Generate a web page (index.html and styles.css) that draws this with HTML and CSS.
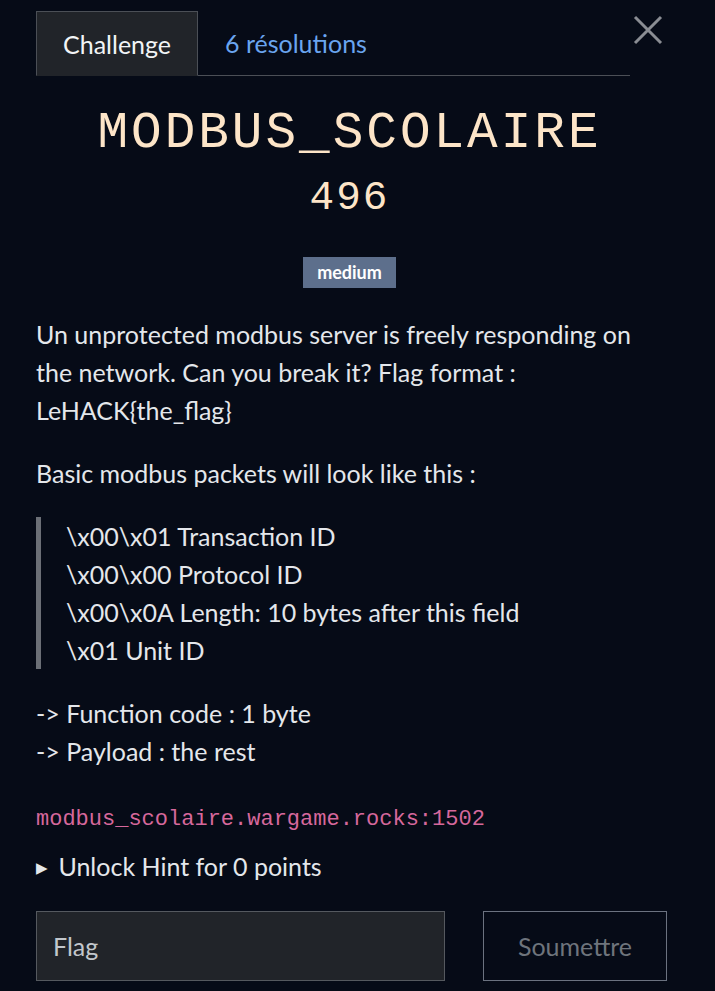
FILE: index.html
```html
<!DOCTYPE html>
<html>

<head>
    <title>MODBUS_SCOLAIRE - Challenge</title>
    <link rel="stylesheet" href="styles.css">
</head>

<body>
    <div class="modal">
        <!-- Tabs + close button -->
        <div class="modal-head">
            <ul class="tabs">
                <li class="tab active">Challenge</li>
                <li class="tab link">6 résolutions</li>
            </ul>
            <button class="close" aria-label="Close">
                <svg width="30" height="30" viewBox="0 0 30 30">
                    <path d="M2 2 L28 28 M28 2 L2 28" stroke="#8a8d93" stroke-width="3" fill="none" />
                </svg>
            </button>
        </div>

        <!-- Challenge header -->
        <h2 class="challenge-name">MODBUS_SCOLAIRE</h2>
        <h3 class="challenge-value">496</h3>
        <div class="tags">
            <span class="badge">medium</span>
        </div>

        <!-- Description -->
        <div class="challenge-desc">
            <p>Un unprotected modbus server is freely responding on the network. Can you break it? Flag format : LeHACK{the_flag}</p>
            <p>Basic modbus packets will look like this :</p>
            <blockquote>
                \x00\x01 Transaction ID<br>
                \x00\x00 Protocol ID<br>
                \x00\x0A Length: 10 bytes after this field<br>
                \x01 Unit ID
            </blockquote>
            <p>-&gt; Function code : 1 byte<br>-&gt; Payload : the rest</p>
            <p class="conn"><code>modbus_scolaire.wargame.rocks:1502</code></p>
        </div>

        <!-- Hint -->
        <div class="hint">
            <span class="arrow">&#9654;</span> Unlock Hint for 0 points
        </div>

        <!-- Submit -->
        <form class="submit-row">
            <input type="text" class="flag-input" placeholder="Flag">
            <button type="button" class="submit-btn">Soumettre</button>
        </form>
    </div>
</body>

</html>
```

FILE: styles.css
```css
body {
    margin: 0;
    background: #060b17;
    color: #e4e7eb;
    font-family: Lato, "Noto Sans", sans-serif;
}

.modal {
    padding: 11px 52px 0 36px;
}

.modal-head {
    display: flex;
    align-items: flex-start;
}

.tabs {
    display: flex;
    flex: 1;
    list-style: none;
    margin: 0;
    padding: 0;
    border-bottom: 1px solid #4b4f56;
}

.tab {
    padding: 0 26px;
    height: 63px;
    line-height: 65px;
    font-size: 25px;
    margin-bottom: -1px;
}

.tab.active {
    background: #212429;
    border: 1px solid #4b4f56;
    border-bottom-color: #212429;
    color: #f2f4f6;
}

.tab.link {
    color: #6aa5ef;
    padding-left: 27px;
}

.close {
    background: none;
    border: 0;
    padding: 0;
    margin: 4px 0 0 3px;
    width: 30px;
    height: 30px;
    cursor: pointer;
}

.close svg {
    display: block;
}

.challenge-name {
    margin: 28px 0 0;
    text-align: center;
    font-family: "Liberation Mono", monospace;
    font-weight: normal;
    font-size: 51px;
    letter-spacing: 3px;
    line-height: 60px;
    color: #fde5c8;
}

.challenge-value {
    margin: 9px 0 0;
    text-align: center;
    font-family: "Liberation Mono", monospace;
    font-weight: normal;
    font-size: 41px;
    letter-spacing: 0.05em;
    line-height: 50px;
    color: #fde5c8;
}

.tags {
    text-align: center;
    margin-top: 34px;
}

.badge {
    display: inline-block;
    background: #5d6f8c;
    color: #fff;
    font-weight: bold;
    font-size: 18px;
    padding: 0 14px;
    height: 31px;
    line-height: 31px;
}

.challenge-desc {
    margin-top: 27px;
    font-size: 25px;
    line-height: 38px;
}

.challenge-desc p {
    margin: 0 0 25px;
}

blockquote {
    margin: 0 0 25px;
    padding: 0 0 0 25px;
    border-left: 5px solid #6b6f76;
}

.conn {
    font-size: 22px;
    padding-top: 3px;
}

code {
    font-family: "Liberation Mono", monospace;
    color: #d6689c;
}

.hint {
    font-size: 25px;
    line-height: 38px;
    margin-top: -17px;
}

.arrow {
    font-size: 15px;
    vertical-align: 3px;
    margin-right: 4px;
}

.submit-row {
    display: grid;
    grid-template-columns: 409px 184px;
    gap: 38px;
    margin-top: 25px;
}

.flag-input {
    height: 70px;
    box-sizing: border-box;
    background: #212429;
    border: 1px solid #55595f;
    color: #e4e7eb;
    font-family: Lato, sans-serif;
    font-size: 25px;
    padding: 0 16px;
}

.flag-input::placeholder {
    color: #c3c7cc;
}

.submit-btn {
    height: 70px;
    background: transparent;
    border: 1px solid #6b7280;
    color: #6e747c;
    font-family: Lato, sans-serif;
    font-size: 25px;
}
```
